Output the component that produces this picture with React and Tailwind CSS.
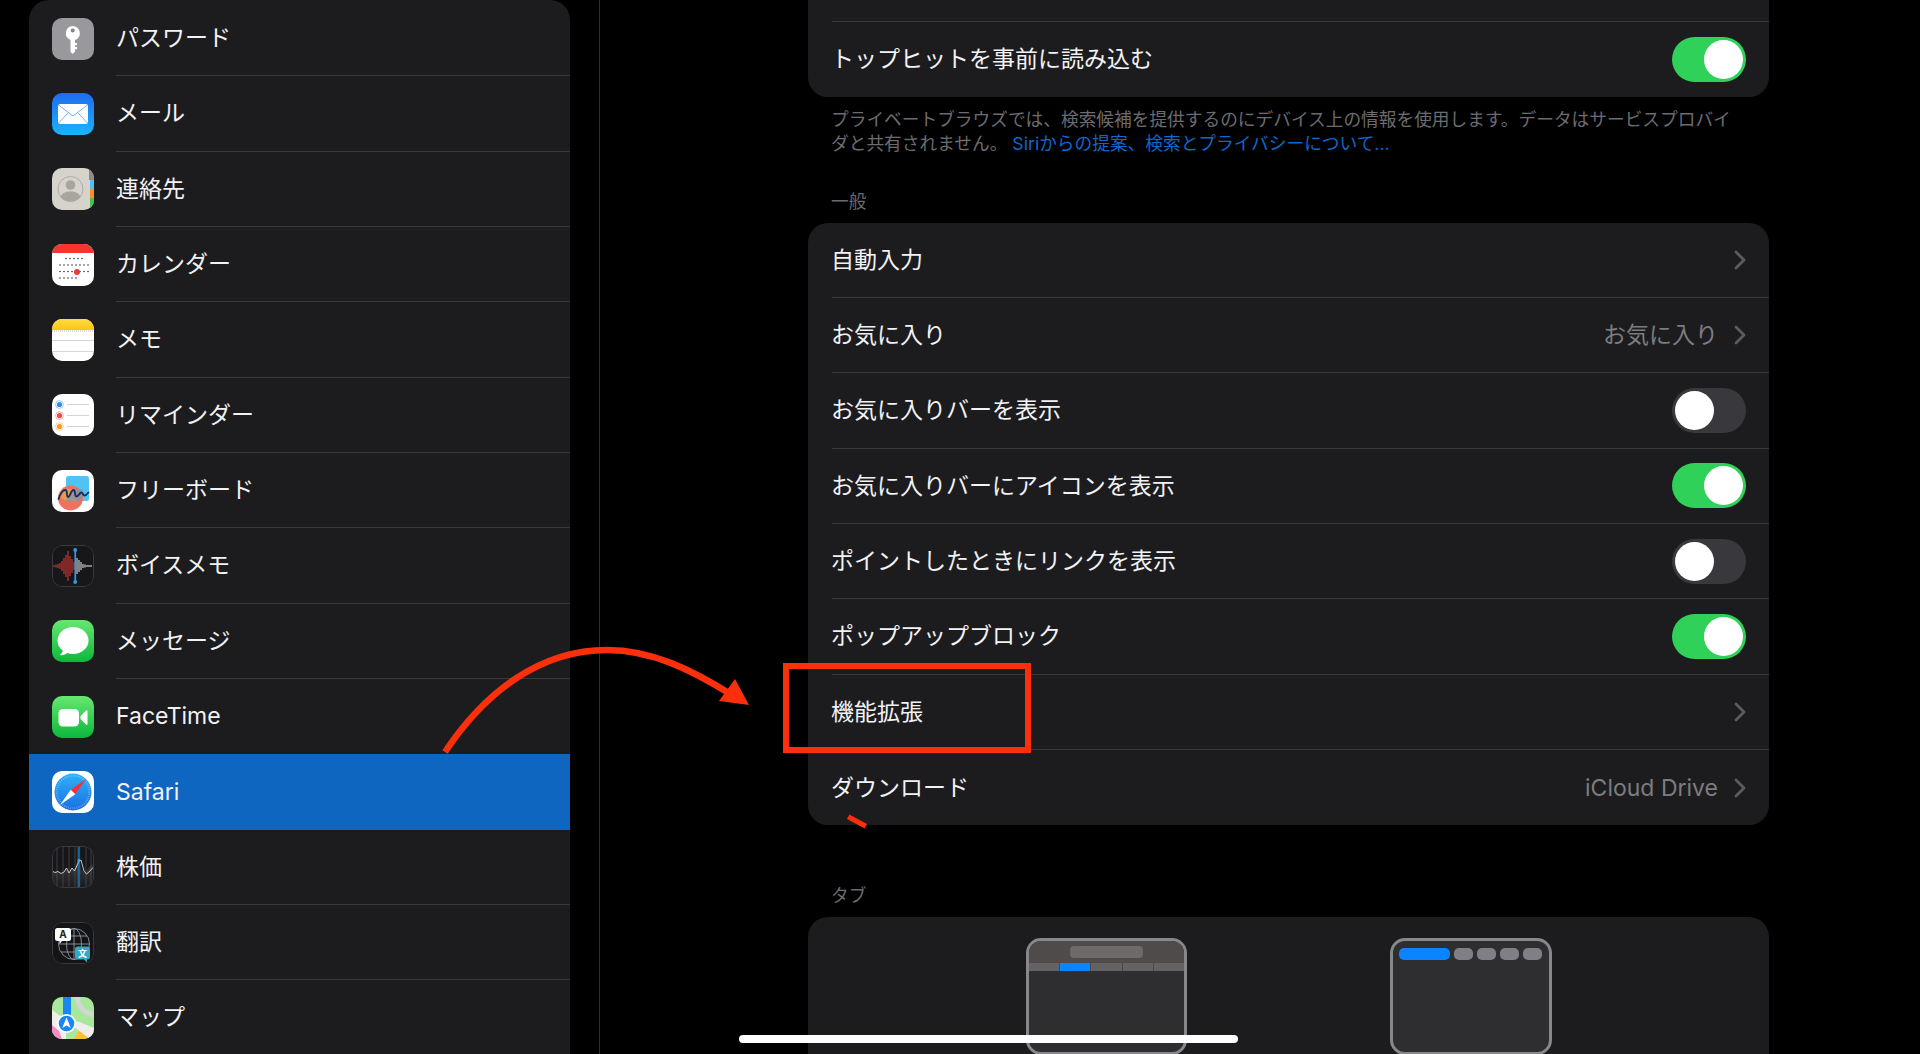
import React from 'react';

const Grad = ({ id, from, to }) => (
  <defs>
    <linearGradient id={id} x1="0" y1="0" x2="0" y2="1">
      <stop offset="0" stopColor={from} />
      <stop offset="1" stopColor={to} />
    </linearGradient>
  </defs>
);

const calendarDots = [
  [14, 14.5, 5], [8, 21, 8], [8, 27.5, 8], [8, 34, 5],
];

const waveRed = [[2, 1], [4, 1.5], [6, 2], [8, 3], [10, 5], [12, 8], [14, 11], [16, 15], [18, 10], [20, 7], [22, 4]];
const waveWhite = [[25, 8], [27, 6], [29, 4], [31, 2], [33, 1.5], [35, 1], [37, 1], [39, 1]];

const icons = {
  key: (
    <>
      <rect width="42" height="42" fill="#98989d" />
      <path d="M20.7 8a7.2 7.2 0 0 1 2.3 14v11.5l-2.3 2.5-2.2-2.2V21.900A7.200 7.200 0 0 1 20.700 8z" fill="#fff" />
      <path d="M23 25h2v2.200h-2zM23 29h2v2.200h-2z" fill="#fff" />
      <circle cx="20.700" cy="12.500" r="2" fill="#85858a" />
    </>
  ),
  mail: (
    <>
      <Grad id="mailBg" from="#1e6cee" to="#1ab4ff" />
      <rect width="42" height="42" fill="url(#mailBg)" />
      <rect x="6" y="11" width="30" height="20" rx="2.500" fill="#fff" />
      <path d="M6.500 12l14.500 11 14.500-11M6.500 30l10-10.500M35.500 30l-10-10.500" fill="none" stroke="#6fb4f5" strokeWidth="1" />
    </>
  ),
  contacts: (
    <>
      <rect width="42" height="42" fill="#d6d3cc" />
      <rect x="37" y="0" width="5" height="12" fill="#8d8b86" />
      <rect x="38" y="12" width="4" height="9" fill="#5bbcf0" />
      <rect x="38" y="21" width="4" height="9" fill="#f7931e" />
      <rect x="38" y="30" width="4" height="12" fill="#4cc04f" />
      <circle cx="18.500" cy="21" r="12.500" fill="none" stroke="#aeaaa4" strokeWidth="1" />
      <circle cx="18.500" cy="17" r="4.800" fill="#a8a49e" />
      <path d="M8.500 29c1.500-4 5.500-5.500 10-5.500s8.500 1.500 10 5.500c-2 2.800-5.500 4.500-10 4.500s-8-1.700-10-4.500z" fill="#a8a49e" />
    </>
  ),
  calendar: (
    <>
      <rect width="42" height="42" fill="#fff" />
      <rect width="42" height="9" fill="#f5352f" />
      {calendarDots.flatMap(([x, y, n], r) =>
        Array.from({ length: n }, (_, i) => (
          <circle key={`${r}-${i}`} cx={x + i * 4} cy={y} r="0.800" fill="#333" />
        ))
      )}
      <circle cx="25" cy="28" r="3" fill="#ee3b35" />
    </>
  ),
  notes: (
    <>
      <rect width="42" height="42" fill="#fff" />
      <Grad id="notesBg" from="#ffdc45" to="#fac515" />
      <rect width="42" height="11" fill="url(#notesBg)" />
      <path d="M0 12h42" stroke="#b5b0a0" strokeWidth="1" strokeDasharray="1 1" />
      <path d="M0 21.500h42M0 32.500h42" stroke="#d6d6d6" strokeWidth="1" />
    </>
  ),
  reminders: (
    <>
      <rect width="42" height="42" fill="#fff" />
      {[[10.500, '#2d8cf0'], [21.500, '#ef4a44'], [32.500, '#f59a23']].map(([y, c]) => (
        <g key={y}>
          <circle cx="7.500" cy={y} r="3.900" fill="none" stroke={c} strokeOpacity="0.500" strokeWidth="0.900" />
          <circle cx="7.500" cy={y} r="2.600" fill={c} />
          <path d={`M15 ${y}h22`} stroke="#d0d0d0" strokeWidth="0.900" />
        </g>
      ))}
    </>
  ),
  freeform: (
    <>
      <rect width="42" height="42" fill="#fff" />
      <rect x="14" y="6" width="23" height="25" rx="2.500" fill="#4fc3f2" />
      <circle cx="18.500" cy="28" r="12.500" fill="#f2705f" />
      <path d="M14 19a12.500 12.500 0 0 0-8 7l8 5h11l-1-12z" fill="#e9a04f" opacity="0.850" />
      <path d="M14 31h12a12.500 12.500 0 0 0 4.500-3.500V19H20z" fill="#7d93b6" opacity="0.700" />
      <path d="M6.500 29c2-6 5-9 7-9 2.500 0 .5 7 2.500 7s3-7 5.500-7c2.300 0 .8 6.500 3 6.500s3-4 5-4c1.700 0 1 3 3 3 1.500 0 2.800-1.500 4-3" fill="none" stroke="#12335f" strokeWidth="1.900" strokeLinecap="round" />
    </>
  ),
  voice: (
    <>
      <rect width="42" height="42" fill="#17171a" />
      {waveRed.map(([x, h]) => (
        <rect key={x} x={x - 0.5} y={21 - h} width="1" height={h * 2} fill="#ea3a33" />
      ))}
      {waveWhite.map(([x, h]) => (
        <rect key={x} x={x - 0.5} y={21 - h} width="1" height={h * 2} fill="#eee" />
      ))}
      <rect x="22.400" y="5" width="1.700" height="32" fill="#2e9be6" />
      <circle cx="23.200" cy="5" r="1.900" fill="#2e9be6" />
      <circle cx="23.200" cy="37" r="1.900" fill="#2e9be6" />
      <rect x="0.500" y="0.500" width="41" height="41" rx="9.500" fill="none" stroke="#3a3a3e" />
    </>
  ),
  messages: (
    <>
      <Grad id="msgBg" from="#67e770" to="#0bb83b" />
      <rect width="42" height="42" fill="url(#msgBg)" />
      <ellipse cx="21" cy="20.500" rx="15.500" ry="13.500" fill="#fff" />
      <path d="M11 29c0 3-1.500 5-3.500 6 3 .5 6.500-.5 8.500-2.500z" fill="#fff" />
    </>
  ),
  facetime: (
    <>
      <Grad id="ftBg" from="#67e770" to="#0bb83b" />
      <rect width="42" height="42" fill="url(#ftBg)" />
      <rect x="6.500" y="13" width="20.500" height="17.500" rx="4.500" fill="#fff" />
      <path d="M28.500 20l5.500-5.500c.6-.6 1.500-.2 1.500.6v12.800c0 .8-.9 1.200-1.500.6L28.500 23z" fill="#fff" />
    </>
  ),
  safari: (
    <>
      <rect width="42" height="42" fill="#fff" />
      <Grad id="safBg" from="#2fb2f8" to="#1b6fe2" />
      <circle cx="21" cy="21" r="18.500" fill="url(#safBg)" />
      <circle cx="21" cy="21" r="16.200" fill="none" stroke="#cfe9ff" strokeWidth="1.800" strokeDasharray="0.500 1.600" opacity="0.700" />
      <path d="M18.700 18.700L34 8 23.300 23.300z" fill="#f0353a" />
      <path d="M18.700 18.700L8 34 23.300 23.300z" fill="#fff" />
    </>
  ),
  stocks: (
    <>
      <Grad id="stkBg" from="#55555a" to="#1c1c1e" />
      <rect width="42" height="42" fill="#17171a" />
      <path d="M0 25l3 1.500 3-1 3 2 3-1.500 2.500-4 2.500 5 3-5 2.500 3 4-12.500 3 11 2.500 3 3.500-3 3-3.500 2 -2V42H0z" fill="url(#stkBg)" opacity="0.650" />
      {[5, 11, 17, 23, 34, 39].map(x => (
        <path key={x} d={`M${x} 1v40`} stroke="#4a4a4e" strokeWidth="0.800" />
      ))}
      <rect x="25.500" y="0" width="2.600" height="42" fill="#1c6da8" opacity="0.850" />
      <path d="M0 25l3 1.500 3-1 3 2 3-1.500 2.500-4 2.500 5 3-5 2.500 3 4-9 2.500-2 3 11 2.500 3 3.500-3 3-3.500 2-2" fill="none" stroke="#d8d8d8" strokeWidth="0.900" />
      <circle cx="27" cy="14.500" r="1.500" fill="#3fa9e8" />
      <rect x="0.500" y="0.500" width="41" height="41" rx="9.500" fill="none" stroke="#3a3a3e" />
    </>
  ),
  translate: (
    <>
      <rect width="42" height="42" fill="#141416" />
      <g fill="none" stroke="#8d959c" strokeWidth="0.900">
        <circle cx="22" cy="22" r="15.500" />
        <ellipse cx="22" cy="22" rx="7.500" ry="15.500" />
        <path d="M22 6.500v31M6.500 22h31M9 14h26M9 30h26" />
      </g>
      <path d="M3 8.500a2.500 2.500 0 0 1 2.500-2.500h11A2.500 2.500 0 0 1 19 8.500v8a2.500 2.500 0 0 1-2.500 2.500H10l-2.500 3v-3H5.500A2.500 2.500 0 0 1 3 16.500z" fill="#fff" />
      <text x="11" y="16" textAnchor="middle" fontSize="10" fontWeight="700" fontFamily="Inter, sans-serif" fill="#222">A</text>
      <path d="M23 27a2.500 2.500 0 0 1 2.500-2.500h10a2.500 2.500 0 0 1 2.500 2.500v8a2.500 2.500 0 0 1-2.500 2.500H35v3l-3-3h-6.500A2.500 2.500 0 0 1 23 35z" fill="#2fa8c4" />
      <text x="30.500" y="35" textAnchor="middle" fontSize="9" fontWeight="700" fontFamily="'Noto Sans CJK JP', sans-serif" fill="#fff">文</text>
      <rect x="0.500" y="0.500" width="41" height="41" rx="9.500" fill="none" stroke="#38383c" />
    </>
  ),
  maps: (
    <>
      <rect width="42" height="42" fill="#a9e89c" />
      <path d="M0 13l14 10v19H0z" fill="#efeeea" />
      <path d="M0 28l7 6 3 8H0z" fill="#f48cc4" />
      <path d="M22 42l5-9 6 4 5 5z" fill="#fcc22c" />
      <path d="M25 24l17 7v11H38L22 30z" fill="#efeeea" />
      <path d="M28 0c0 8 6 14 14 15v5C31 19 23 10 23 0z" fill="#d5d5d5" />
      <rect x="11" y="0" width="8" height="22" fill="#1b86f2" />
      <circle cx="14.500" cy="26.500" r="9.500" fill="#fff" />
      <circle cx="14.500" cy="26.500" r="7.800" fill="#1b86f2" />
      <path d="M14.500 20.500l4.300 10.500-4.300-2.500-4.300 2.500z" fill="#fff" />
    </>
  ),
};

const sidebarItems = [
  { label: 'パスワード', icon: 'key' },
  { label: 'メール', icon: 'mail' },
  { label: '連絡先', icon: 'contacts' },
  { label: 'カレンダー', icon: 'calendar' },
  { label: 'メモ', icon: 'notes' },
  { label: 'リマインダー', icon: 'reminders' },
  { label: 'フリーボード', icon: 'freeform' },
  { label: 'ボイスメモ', icon: 'voice' },
  { label: 'メッセージ', icon: 'messages' },
  { label: 'FaceTime', icon: 'facetime', noLine: true },
  { label: 'Safari', icon: 'safari', active: true },
  { label: '株価', icon: 'stocks' },
  { label: '翻訳', icon: 'translate' },
  { label: 'マップ', icon: 'maps' },
];

const generalRows = [
  { label: '自動入力', chevron: true },
  { label: 'お気に入り', value: 'お気に入り', chevron: true },
  { label: 'お気に入りバーを表示', toggle: false },
  { label: 'お気に入りバーにアイコンを表示', toggle: true },
  { label: 'ポイントしたときにリンクを表示', toggle: false },
  { label: 'ポップアップブロック', toggle: true },
  { label: '機能拡張', chevron: true },
  { label: 'ダウンロード', value: 'iCloud Drive', chevron: true, last: true },
];

const AppIcon = ({ name }) => (
  <div className="w-[42px] h-[42px] rounded-[10px] overflow-hidden shrink-0">
    <svg width="42" height="42" viewBox="0 0 42 42" className="block">
      {icons[name]}
    </svg>
  </div>
);

const SidebarRow = ({ item }) => (
  <div className={`flex items-center h-[75.33px] pl-[23px] gap-[22px] ${item.active ? 'bg-[#0f66c1]' : ''}`}>
    <AppIcon name={item.icon} />
    <div className={`flex-1 h-full flex items-center text-[23px] ${item.active || item.noLine ? '' : 'border-b border-[#38383a]'}`}>
      {item.label}
    </div>
  </div>
);

const Toggle = ({ on }) => (
  <div className={`flex items-center w-[74px] h-[45px] rounded-full px-[3px] ${on ? 'bg-[#30d158] justify-end' : 'bg-[#39393d] justify-start'}`}>
    <div className="w-[39px] h-[39px] rounded-full bg-white" />
  </div>
);

const Chevron = () => (
  <svg width="12" height="20" viewBox="0 0 12 20" className="ml-[16px]">
    <path d="M2 2l8 8-8 8" fill="none" stroke="#5c5c60" strokeWidth="2.800" strokeLinecap="round" strokeLinejoin="round" />
  </svg>
);

const SettingRow = ({ row }) => (
  <div className={`flex items-center justify-between h-[75.33px] ml-[24px] pr-[23px] text-[23px] ${row.last ? '' : 'border-b border-[#38383a]'}`}>
    <span className="-ml-px">{row.label}</span>
    {row.toggle !== undefined && <Toggle on={row.toggle} />}
    {row.chevron && (
      <div className="flex items-center text-[#7c7c80]">
        {row.value && <span>{row.value}</span>}
        <Chevron />
      </div>
    )}
  </div>
);

const SectionLabel = ({ children, className }) => (
  <div className={`pl-[23px] h-[24px] leading-[24px] text-[17.7px] text-[#6c6c70] ${className}`}>{children}</div>
);

const TabBarPreview = () => (
  <div className="w-[161px] h-[117px] shrink-0 rounded-[15px] border-[3px] border-[#87878c] bg-[#2e2e31] overflow-hidden">
    <div className="flex justify-center items-center h-[22px] bg-[#4e4b4a]">
      <div className="w-[73px] h-[12px] rounded-[4px] bg-[#6d6a69]" />
    </div>
    <div className="flex gap-px h-[8px] bg-[#4a4a4c]">
      <div className="flex-1 bg-[#636366]" />
      <div className="flex-1 bg-[#0a84ff]" />
      <div className="flex-1 bg-[#636366]" />
      <div className="flex-1 bg-[#636366]" />
      <div className="flex-1 bg-[#636366]" />
    </div>
  </div>
);

const CompactPreview = () => (
  <div className="w-[162px] h-[117px] shrink-0 rounded-[15px] border-[3px] border-[#87878c] bg-[#2e2e31] overflow-hidden flex items-start gap-[4px] pl-[6px] pt-[7px]">
    <div className="w-[51px] h-[12px] rounded-[5px] bg-[#0a84ff]" />
    <div className="w-[19px] h-[12px] rounded-[5px] bg-[#7f7f85]" />
    <div className="w-[19px] h-[12px] rounded-[5px] bg-[#7f7f85]" />
    <div className="w-[19px] h-[12px] rounded-[5px] bg-[#7f7f85]" />
    <div className="w-[19px] h-[12px] rounded-[5px] bg-[#7f7f85]" />
  </div>
);

export default function App() {
  return (
    <div className="relative flex h-[1054px] overflow-hidden bg-black text-[#f2f2f5] font-[Inter,'Noto_Sans_CJK_JP',sans-serif]">
      <aside className="ml-[29px] w-[541px] h-full pt-px bg-[#1c1c1e] rounded-t-[20px] overflow-hidden shrink-0">
        {sidebarItems.map(item => (
          <SidebarRow key={item.label} item={item} />
        ))}
      </aside>

      <div className="ml-[29px] w-px h-full bg-[#2e2e30] shrink-0" />

      <main className="ml-[208px] w-[961px] shrink-0">
        <div className="bg-[#1c1c1e] rounded-b-[20px]">
          <div className="h-[21.5px] ml-[24px] border-b border-[#38383a]" />
          <SettingRow row={{ label: 'トップヒットを事前に読み込む', toggle: true, last: true }} />
        </div>

        <p className="pt-[11px] pl-[23px] pr-[30px] text-[17.7px] leading-[24px] text-[#6c6c70]">
          プライベートブラウズでは、検索候補を提供するのにデバイス上の情報を使用します。データはサービスプロバイダと共有されません。
          <span className="text-[#0f68cc]"> Siriからの提案、検索とプライバシーについて...</span>
        </p>

        <SectionLabel className="mt-[34px] mb-[9px]">一般</SectionLabel>

        <div className="bg-[#1c1c1e] rounded-[20px]">
          {generalRows.map(row => (
            <SettingRow key={row.label} row={row} />
          ))}
        </div>

        <SectionLabel className="mt-[59px] mb-[9px]">タブ</SectionLabel>

        <div className="flex gap-[203px] pl-[218px] pt-[21px] h-[300px] bg-[#1c1c1e] rounded-[20px]">
          <TabBarPreview />
          <CompactPreview />
        </div>
      </main>

      {/* annotation drawn over the screenshot */}
      <svg className="absolute left-[430px] top-[630px] pointer-events-none" width="340" height="130" viewBox="0 0 340 130">
        <path d="M15 122C55 62 110 20 177 20c45 0 85 20 125 45" fill="none" stroke="#fb2f0b" strokeWidth="6.500" />
        <path d="M319 75L289 71 305 49z" fill="#fb2f0b" />
      </svg>
      <div className="absolute left-[783px] top-[663px] w-[248px] h-[90px] border-[6px] border-[#fb2f0b]" />
      <div className="absolute left-[847px] top-[815px] w-[20px] h-[5px] bg-[#fb2f0b] rotate-[28deg] translate-y-[4px]" />

      <div className="absolute left-[739px] top-[1035px] w-[499px] h-[8px] rounded-full bg-white" />
    </div>
  );
}
